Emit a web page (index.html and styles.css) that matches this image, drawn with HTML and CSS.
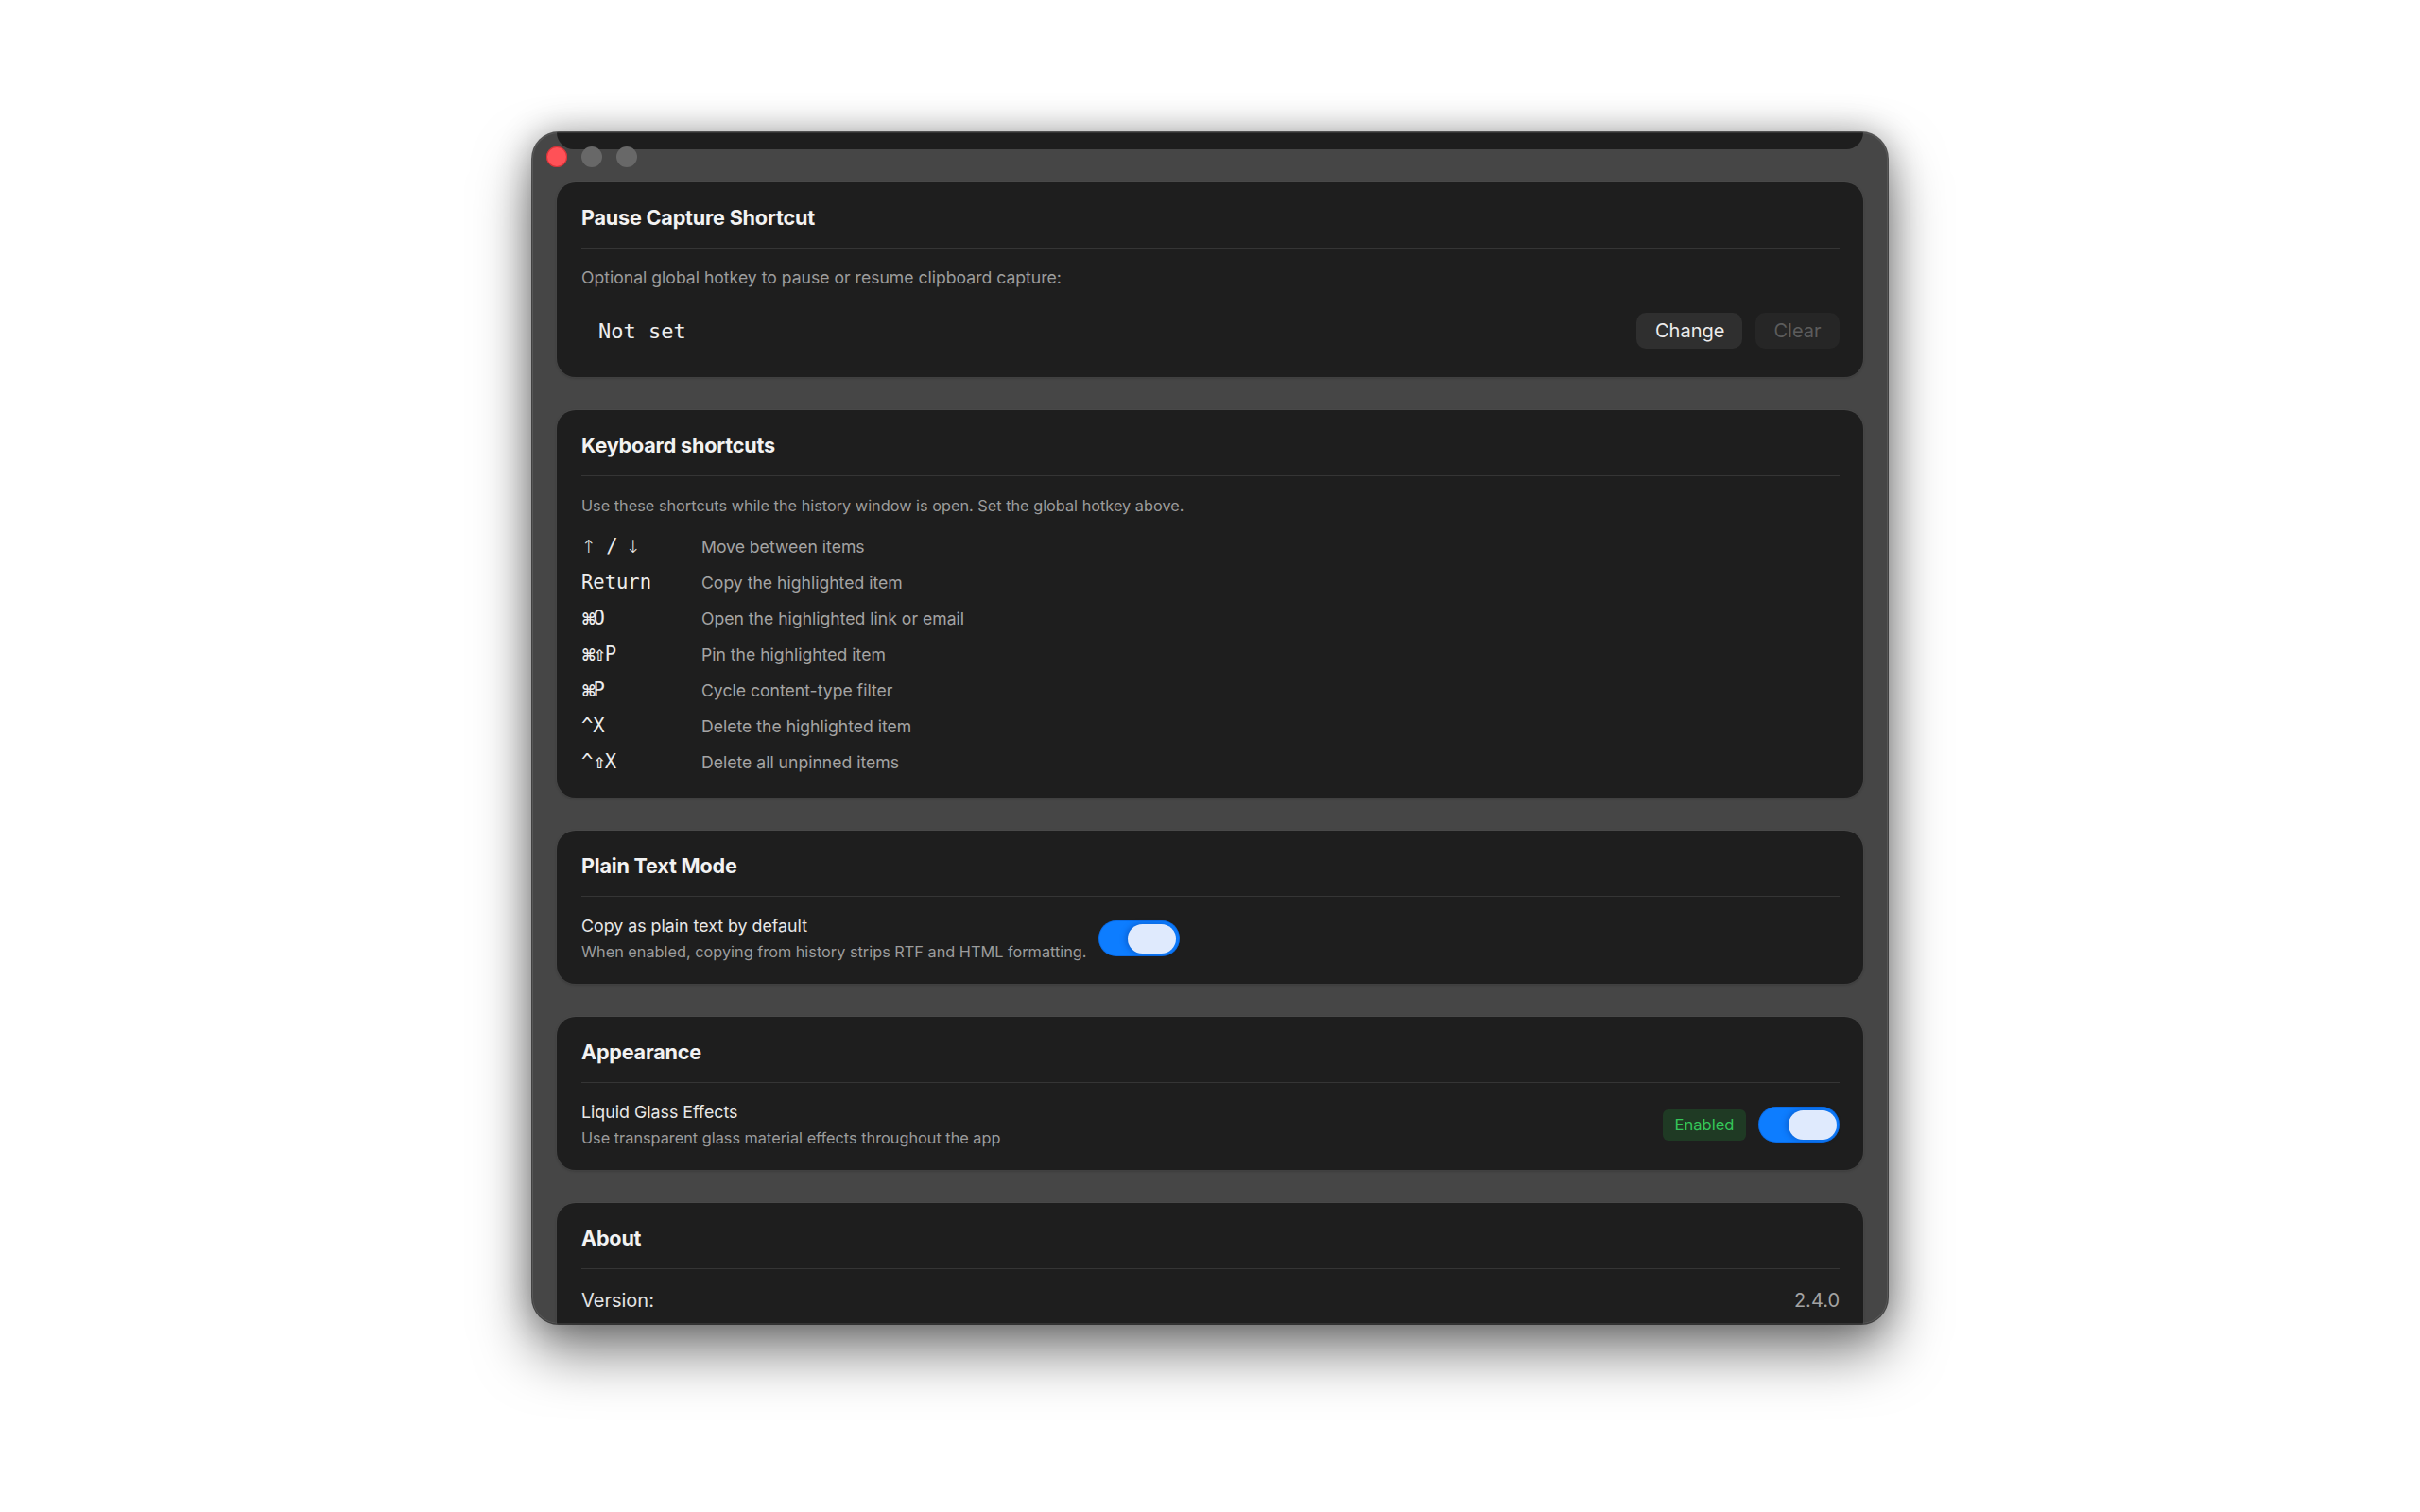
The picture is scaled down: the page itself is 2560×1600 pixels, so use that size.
FILE: index.html
```html
<!DOCTYPE html>
<html lang="en">
<head>
<meta charset="utf-8">
<title>Settings</title>
<link rel="stylesheet" href="styles.css">
</head>
<body>
<div class="window">
  <div class="traffic">
    <span class="light red"></span>
    <span class="light"></span>
    <span class="light"></span>
  </div>
  <div class="content">
    <div class="stub"></div>

    <section class="card card-pause">
      <div class="card-head"><h2>Pause Capture Shortcut</h2></div>
      <p class="desc desc-lg">Optional global hotkey to pause or resume clipboard capture:</p>
      <div class="hotkey-row">
        <span class="hotkey">Not set</span>
        <div class="buttons">
          <button class="btn">Change</button>
          <button class="btn btn-disabled">Clear</button>
        </div>
      </div>
    </section>

    <section class="card card-shortcuts">
      <div class="card-head"><h2>Keyboard shortcuts</h2></div>
      <p class="desc">Use these shortcuts while the history window is open. Set the global hotkey above.</p>
      <ul class="shortcuts">
        <li><span class="key"><span class="sym">↑</span><span class="sep"> / </span><span class="sym">↓</span></span><span class="what">Move between items</span></li>
        <li><span class="key">Return</span><span class="what">Copy the highlighted item</span></li>
        <li><span class="key"><span class="cmd">⌘</span>O</span><span class="what">Open the highlighted link or email</span></li>
        <li><span class="key"><span class="cmd">⌘</span><span class="shift">⇧</span>P</span><span class="what">Pin the highlighted item</span></li>
        <li><span class="key"><span class="cmd">⌘</span>P</span><span class="what">Cycle content-type filter</span></li>
        <li><span class="key">^X</span><span class="what">Delete the highlighted item</span></li>
        <li><span class="key">^<span class="shift">⇧</span>X</span><span class="what">Delete all unpinned items</span></li>
      </ul>
    </section>

    <section class="card card-setting">
      <div class="card-head"><h2>Plain Text Mode</h2></div>
      <div class="setting-row setting-inline">
        <div class="setting-text">
          <div class="label">Copy as plain text by default</div>
          <div class="desc">When enabled, copying from history strips RTF and HTML formatting.</div>
        </div>
        <span class="toggle on"><span class="knob"></span></span>
      </div>
    </section>

    <section class="card card-setting">
      <div class="card-head"><h2>Appearance</h2></div>
      <div class="setting-row">
        <div class="setting-text">
          <div class="label">Liquid Glass Effects</div>
          <div class="desc">Use transparent glass material effects throughout the app</div>
        </div>
        <div class="setting-controls">
          <span class="badge">Enabled</span>
          <span class="toggle on"><span class="knob"></span></span>
        </div>
      </div>
    </section>

    <section class="card card-about">
      <div class="card-head"><h2>About</h2></div>
      <div class="about-row">
        <span class="about-label">Version:</span>
        <span class="about-value">2.4.0</span>
      </div>
    </section>
  </div>
</div>
</body>
</html>
```

FILE: styles.css
```css
* { box-sizing: border-box; }

html, body {
  margin: 0;
  padding: 0;
  background: #ffffff;
}

body {
  font-family: "Inter", "Liberation Sans", sans-serif;
  color: #ececec;
  padding-top: 140px;
  min-height: 1600px;
}

.window {
  position: relative;
  width: 1434px;
  height: 1261px;
  margin: 0 auto;
  background: #464646;
  border-radius: 28px;
  overflow: hidden;
  box-shadow:
    0 0 0 1px rgba(0, 0, 0, 0.6),
    0 30px 60px rgba(0, 0, 0, 0.5),
    0 0 36px rgba(0, 0, 0, 0.3);
}

.window::after {
  content: "";
  position: absolute;
  inset: 0;
  border-radius: 28px;
  box-shadow: inset 0 0 0 1px rgba(255, 255, 255, 0.1);
  pointer-events: none;
  z-index: 3;
}

.traffic {
  position: absolute;
  top: 15px;
  left: 15px;
  display: flex;
  gap: 15px;
  z-index: 2;
}

.light {
  width: 22px;
  height: 22px;
  border-radius: 50%;
  background: #686868;
}

.light.red {
  background: #ff5157;
  box-shadow: inset 0 0 0 1px rgba(190, 30, 35, 0.6);
}

.content {
  display: flex;
  flex-direction: column;
  gap: 35px;
  padding: 0 26px;
}

.stub {
  height: 18px;
  background: #1e1e1e;
  border-radius: 0 0 20px 20px;
}

.card {
  background: #1e1e1e;
  border-radius: 20px;
  padding: 24px 25px 0 26px;
  box-shadow: 0 0 0 1px rgba(255, 255, 255, 0.035), 0 1px 3px rgba(0, 0, 0, 0.25);
  flex-shrink: 0;
}

.card-head {
  padding-bottom: 19px;
  border-bottom: 1px solid #353535;
}

.card-head h2 {
  margin: 0;
  font-size: 21.6px;
  line-height: 26px;
  font-weight: 700;
  color: #f2f2f2;
  letter-spacing: -0.2px;
}

.desc {
  margin: 0;
  color: #9c9c9c;
  font-size: 16.3px;
  line-height: 20px;
}

.desc-lg {
  font-size: 17.6px;
  line-height: 22px;
  margin-top: 20px;
}

/* Pause capture card */
.card-pause { padding-bottom: 30px; }

.hotkey-row {
  display: flex;
  align-items: center;
  justify-content: space-between;
  margin-top: 26px;
  height: 38px;
}

.hotkey {
  font-family: "DejaVu Sans Mono", "Liberation Mono", monospace;
  font-size: 22px;
  color: #eeeeee;
  padding-left: 18px;
}

.buttons {
  display: flex;
  gap: 14px;
}

.btn {
  font-family: "Inter", "Liberation Sans", sans-serif;
  font-size: 20px;
  height: 38px;
  border: none;
  border-radius: 10px;
  background: #2f2f2f;
  color: #ececec;
  padding: 0 20px;
  width: 112px;
}

.btn-disabled {
  background: #262626;
  color: #5c5c5c;
  width: 89px;
  padding: 0 16px;
}

/* Shortcuts card */
.card-shortcuts { padding-bottom: 19px; }

.card-shortcuts .desc {
  margin-top: 21px;
}

.shortcuts {
  list-style: none;
  margin: 14px 0 0 0;
  padding: 0;
}

.shortcuts li {
  display: flex;
  align-items: baseline;
  height: 38px;
  line-height: 38px;
}

.key {
  width: 127px;
  flex-shrink: 0;
  font-family: "DejaVu Sans Mono", "Liberation Mono", monospace;
  font-size: 20.5px;
  color: #ececec;
  white-space: pre;
}

.key .sym {
  font-family: "DejaVu Sans", sans-serif;
  font-size: 19px;
  font-weight: 300;
}

.key .sep {
  letter-spacing: -2px;
}

.key .cmd {
  display: inline-block;
  width: 12.4px;
  text-align: left;
  font-family: "DejaVu Sans", sans-serif;
  font-size: 17px;
  font-weight: 700;
}

.key .shift {
  display: inline-block;
  width: 12.4px;
  text-align: center;
  font-family: "DejaVu Sans", sans-serif;
  font-size: 16px;
  font-weight: 700;
}

.what {
  font-size: 17.6px;
  color: #a4a4a4;
}

/* Setting cards */
.card-setting { padding-bottom: 24px; }

.setting-row {
  display: flex;
  align-items: center;
  justify-content: space-between;
  margin-top: 20px;
}

.setting-inline {
  justify-content: flex-start;
  gap: 12px;
}

.label {
  font-size: 17.8px;
  line-height: 22px;
  color: #e8e8e8;
}

.setting-text .desc {
  margin-top: 6px;
}

.setting-controls {
  display: flex;
  align-items: center;
  gap: 13px;
}

.badge {
  display: inline-flex;
  align-items: center;
  justify-content: center;
  width: 88px;
  height: 33px;
  border-radius: 6px;
  background: #1f3a24;
  color: #35c659;
  font-size: 16.5px;
}

.toggle {
  position: relative;
  display: inline-block;
  width: 86px;
  height: 38px;
  border-radius: 19px;
  background: #0d7dff;
  box-shadow: inset 0 0 0 1px rgba(0, 60, 160, 0.25);
}

.toggle .knob {
  position: absolute;
  top: 3.5px;
  right: 3.5px;
  width: 51px;
  height: 31px;
  border-radius: 16px;
  background: #dfeafd;
  box-shadow: -2px 0 6px rgba(0, 40, 120, 0.35);
}

/* About card */
.card-about { padding-bottom: 30px; }

.about-row {
  display: flex;
  justify-content: space-between;
  font-size: 20px;
  line-height: 24px;
  margin-top: 21px;
}

.about-label { color: #e4e4e4; }
.about-value { color: #a3a3a3; }
```
